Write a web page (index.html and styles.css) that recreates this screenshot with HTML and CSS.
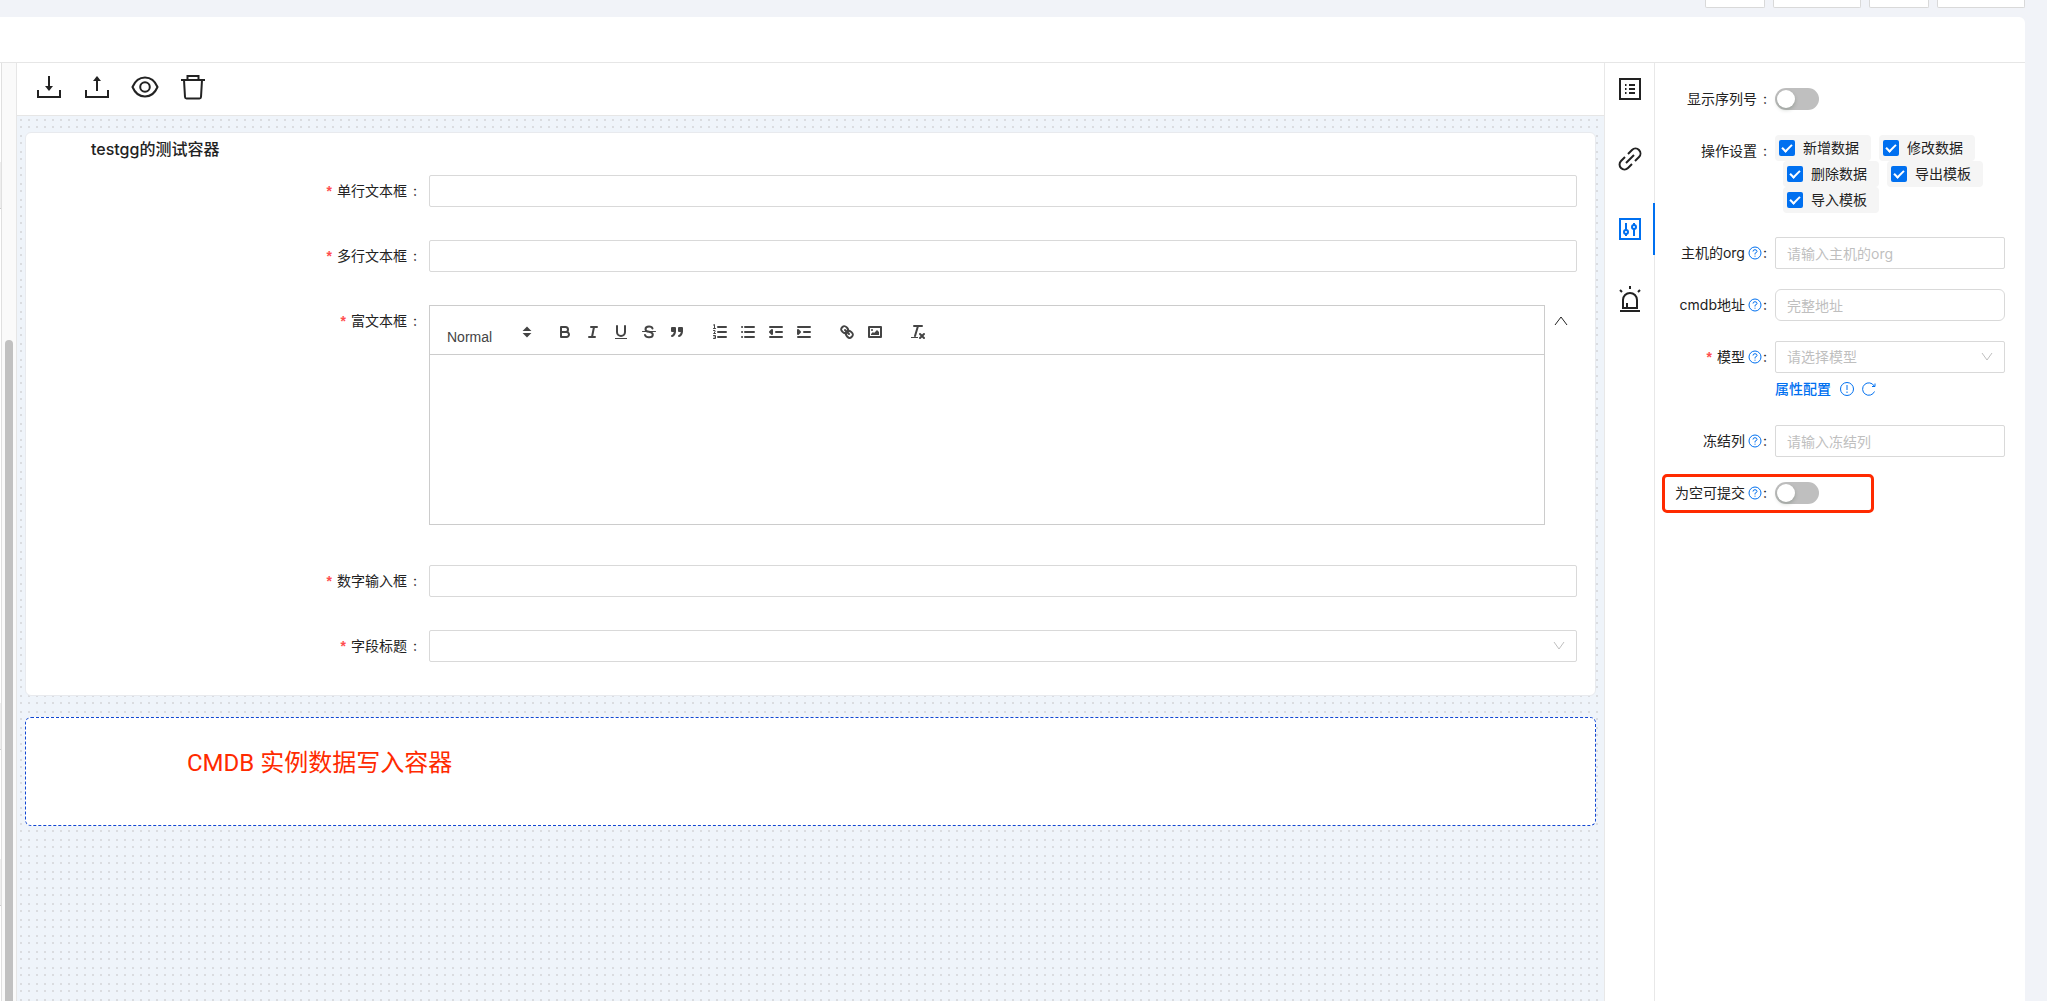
FILE: index.html
```html
<!DOCTYPE html>
<html lang="zh-CN">
<head>
  <meta charset="utf-8">
  <title>模板设计</title>
  <link rel="stylesheet" href="styles.css">
</head>
<body>
  <div class="top-actions">
    <button class="top-btn"></button>
    <button class="top-btn wide"></button>
    <button class="top-btn"></button>
    <button class="top-btn wide"></button>
  </div>

  <div class="page">
    <div class="page-header"></div>
    <div class="workspace">

      <!-- 左侧控件列表 -->
      <div class="side-list">
        <div class="side-edge">
          <i class="side-item"></i>
          <i class="side-item far"></i>
          <i class="side-item next"></i>
        </div>
        <div class="side-scroll"></div>
      </div>

      <!-- 画布 -->
      <main class="designer">
        <div class="tools">
          <button class="tool" aria-label="导入">
            <svg viewBox="0 0 28 28"><path d="M14 3v12" stroke-width="2"/><path d="M10 13h8l-4 5z" fill="currentColor" stroke="none"/><path d="M3 17v7h22v-7" stroke-width="2"/></svg>
          </button>
          <button class="tool" aria-label="导出">
            <svg viewBox="0 0 28 28"><path d="M14 18V6" stroke-width="2"/><path d="M10 8h8l-4-5z" fill="currentColor" stroke="none"/><path d="M3 17v7h22v-7" stroke-width="2"/></svg>
          </button>
          <button class="tool" aria-label="预览">
            <svg viewBox="0 0 28 28"><path d="M1.500 14C4 8 8.500 4.500 14 4.500S24 8 26.500 14C24 20 19.500 23.500 14 23.500S4 20 1.500 14z" stroke-width="2"/><circle cx="14" cy="14" r="4.800" stroke-width="2"/></svg>
          </button>
          <button class="tool" aria-label="删除">
            <svg viewBox="0 0 28 28"><path d="M2 7h24M8.500 7V3h11v4M5 7l1 17q.1 1.500 1.500 1.500h13q1.400 0 1.500-1.500L23 7" stroke-width="2"/></svg>
          </button>
        </div>

        <div class="canvas">
          <section class="card">
            <h3 class="card-title">testgg的测试容器</h3>
            <div class="row">
              <label class="label required" for="single">单行文本框</label>
              <input class="input" type="text" id="single">
            </div>
            <div class="row">
              <label class="label required" for="multi">多行文本框</label>
              <input class="input" type="text" id="multi">
            </div>
            <div class="row rich-row">
              <label class="label required" for="rich">富文本框</label>
              <div class="editor">
                <div class="editor-bar">
                  <button class="heading">Normal
                    <svg viewBox="0 0 18 18"><polygon points="7 11 9 13 11 11"/><polygon points="7 7 9 5 11 7"/></svg>
                  </button>
                  <div class="formats">
                    <button aria-label="粗体"><svg viewBox="0 0 18 18"><path d="M5,4H9.500A2.500,2.500,0,0,1,12,6.500v0A2.500,2.500,0,0,1,9.500,9H5A0,0,0,0,1,5,9V4A0,0,0,0,1,5,4Z"/><path d="M5,9h5.500A2.500,2.500,0,0,1,13,11.500v0A2.500,2.500,0,0,1,10.500,14H5a0,0,0,0,1,0,0V9A0,0,0,0,1,5,9Z"/></svg></button>
                    <button aria-label="斜体"><svg viewBox="0 0 18 18"><path d="M7 4h6M5 14h6M8 14l2-10"/></svg></button>
                    <button aria-label="下划线"><svg viewBox="0 0 18 18"><path d="M5,3V9a4.012,4.012,0,0,0,4,4H9a4.012,4.012,0,0,0,4-4V3"/><rect class="solid" x="3" y="15" width="12" height="1"/></svg></button>
                    <button aria-label="删除线"><svg viewBox="0 0 18 18"><path class="thin" d="M15.500 8.500h-13"/><path d="M12.500 5.500Q12 3.500 9 3.500 5.500 3.500 5.500 6.200 5.500 8.300 9 8.800 12.800 9.500 12.800 11.700 12.800 14.300 9 14.300 5.700 14.300 5 12"/></svg></button>
                    <button aria-label="引用"><svg viewBox="0 0 18 18"><rect class="full" x="4" y="5" width="3" height="3"/><rect class="full" x="11" y="5" width="3" height="3"/><path class="full" d="M7,8c0,4.031-3,5-3,5M14,8c0,4.031-3,5-3,5"/></svg></button>
                  </div>
                  <div class="formats">
                    <button aria-label="有序列表"><svg viewBox="0 0 18 18"><path d="M7 4h8M7 9h8M7 14h8"/><path class="thin" d="M2.500 5.500h2M3.500 5.500v-4L2.500 2M2.500 7.500h1.500v1.500L2.500 10.500h2M2.500 12.500h2v3h-2M3 14h1.500"/></svg></button>
                    <button aria-label="无序列表"><svg viewBox="0 0 18 18"><path d="M6 4h9M6 9h9M6 14h9M3 4h.1M3 9h.1M3 14h.1"/></svg></button>
                    <button aria-label="减少缩进"><svg viewBox="0 0 18 18"><path d="M3 14h12M3 4h12M9 9h6"/><polygon class="full" points="5 7 5 11 3 9"/></svg></button>
                    <button aria-label="增加缩进"><svg viewBox="0 0 18 18"><path d="M3 14h12M3 4h12M9 9h6"/><polygon class="full" points="3 7 3 11 5 9"/></svg></button>
                  </div>
                  <div class="formats">
                    <button aria-label="链接"><svg viewBox="0 0 18 18"><path d="M7 7l4 4"/><path d="M8.900,4.577a3.476,3.476,0,0,1,.36,4.679A3.476,3.476,0,0,1,4.577,8.900C3.185,7.500,2.035,6.400,4.217,4.217S7.500,3.185,8.900,4.577Z"/><path d="M13.423,9.100a3.476,3.476,0,0,0-4.679-.36,3.476,3.476,0,0,0,.36,4.679c1.392,1.392,2.500,2.542,4.679.36S14.815,10.500,13.423,9.100Z"/></svg></button>
                    <button aria-label="图片"><svg viewBox="0 0 18 18"><rect x="3" y="4" width="12" height="10"/><circle class="solid" cx="6" cy="7" r="1"/><polyline class="solid" points="5 12 5 11 7 9 8 10 11 7 13 9 13 12 5 12"/></svg></button>
                  </div>
                  <div class="formats">
                    <button aria-label="清除格式"><svg viewBox="0 0 18 18"><path d="M5 3h8M6 13l3-10M11 11l4 4M15 11l-4 4"/><rect class="solid" x="2" y="14" width="7" height="1"/></svg></button>
                  </div>
                </div>
                <textarea class="editor-body" id="rich"></textarea>
              </div>
              <button class="fold" aria-label="收起">
                <svg viewBox="0 0 14 14"><path d="M1 11L7 3l6 8"/></svg>
              </button>
            </div>
            <div class="row">
              <label class="label required" for="number">数字输入框</label>
              <input class="input" type="text" id="number">
            </div>
            <div class="row">
              <label class="label required" for="field">字段标题</label>
              <select class="input" id="field"><option></option></select>
            </div>
          </section>

          <section class="card active">
            <p class="note">CMDB 实例数据写入容器</p>
          </section>
        </div>
      </main>

      <!-- 属性分类 -->
      <nav class="tabs">
        <button class="tab" aria-label="字段"><svg viewBox="0 0 24 24"><path d="M2 2h20v20H2zM7 8h1.500M7 12h1.500M7 16h1.500M11 8h6M11 12h6M11 16h6"/></svg></button>
        <button class="tab" aria-label="关联"><svg viewBox="0 0 24 24"><path d="M8 16l8-8M10 7l4-4a4.500 4.500 0 0 1 7 7l-4 4M14 17l-4 4a4.500 4.500 0 0 1-7-7l4-4"/></svg></button>
        <button class="tab on" aria-label="配置"><svg viewBox="0 0 24 24"><path d="M2 2h20v20H2zM8 6v7M8 17v2M16 6v2M16 12v7"/><circle cx="8" cy="15" r="2"/><circle cx="16" cy="10" r="2"/></svg></button>
        <button class="tab" aria-label="告警"><svg viewBox="0 0 24 26"><path d="M12 0v3M2 4l2 2M22 4l-2 2M5 22V14a7 7 0 0 1 14 0v8M2 25h20M4 22h16M9 22v-5"/></svg></button>
      </nav>

      <aside class="props">
        <div class="prop">
          <label class="label" for="serial">显示序列号</label>
          <input class="switch" type="checkbox" id="serial">
        </div>
        <div class="prop checks-row">
          <span class="label">操作设置</span>
          <div class="checks">
            <label class="check"><input type="checkbox" checked>新增数据</label>
            <label class="check"><input type="checkbox" checked>修改数据</label>
            <label class="check"><input type="checkbox" checked>删除数据</label>
            <label class="check"><input type="checkbox" checked>导出模板</label>
            <label class="check"><input type="checkbox" checked>导入模板</label>
          </div>
        </div>
        <div class="prop">
          <label class="label tip" for="org">主机的org<svg viewBox="0 0 14 14"><circle cx="7" cy="7" r="6"/><path d="M5 5.500Q5 3.700 7 3.700T9 5.500Q9 6.500 7 7.300V8.500M7 9.700v1"/></svg></label>
          <input class="input" type="text" id="org" placeholder="请输入主机的org">
        </div>
        <div class="prop">
          <label class="label tip" for="cmdb">cmdb地址<svg viewBox="0 0 14 14"><circle cx="7" cy="7" r="6"/><path d="M5 5.500Q5 3.700 7 3.700T9 5.500Q9 6.500 7 7.300V8.500M7 9.700v1"/></svg></label>
          <input class="input round" type="text" id="cmdb" placeholder="完整地址">
        </div>
        <div class="prop">
          <label class="label tip required" for="model">模型<svg viewBox="0 0 14 14"><circle cx="7" cy="7" r="6"/><path d="M5 5.500Q5 3.700 7 3.700T9 5.500Q9 6.500 7 7.300V8.500M7 9.700v1"/></svg></label>
          <div class="model">
            <select class="input empty" id="model"><option>请选择模型</option></select>
            <div class="model-links">
              <a href="#">属性配置</a>
              <svg viewBox="0 0 16 16"><circle cx="8" cy="8" r="6.500"/><path d="M8 4v5M8 10.500v1.500"/></svg>
              <svg viewBox="0 0 16 16"><path d="M13.500 10.500A6.200 6.200 0 1 1 13.200 5M14 2.500V5.500h-3"/></svg>
            </div>
          </div>
        </div>
        <div class="prop">
          <label class="label tip" for="freeze">冻结列<svg viewBox="0 0 14 14"><circle cx="7" cy="7" r="6"/><path d="M5 5.500Q5 3.700 7 3.700T9 5.500Q9 6.500 7 7.300V8.500M7 9.700v1"/></svg></label>
          <input class="input" type="text" id="freeze" placeholder="请输入冻结列">
        </div>
        <div class="prop marked">
          <label class="label tip" for="nullable">为空可提交<svg viewBox="0 0 14 14"><circle cx="7" cy="7" r="6"/><path d="M5 5.500Q5 3.700 7 3.700T9 5.500Q9 6.500 7 7.300V8.500M7 9.700v1"/></svg></label>
          <input class="switch" type="checkbox" id="nullable">
        </div>
      </aside>
    </div>
  </div>
</body>
</html>
```

FILE: styles.css
```css
*,
*::before,
*::after {
  box-sizing: border-box;
}

body {
  margin: 0;
  height: 100vh;
  display: flex;
  flex-direction: column;
  overflow: hidden;
  background: #f1f3f8;
  color: #222;
  font: 14px/22px Inter, "Noto Sans CJK SC", sans-serif;
}

button {
  padding: 0;
  border: 0;
  background: none;
  color: inherit;
  font: inherit;
  cursor: pointer;
}

svg {
  display: block;
  fill: none;
  stroke: currentColor;
}

/* 顶部按钮 */
.top-actions {
  display: flex;
  justify-content: flex-end;
  align-items: flex-start;
  gap: 8px;
  height: 17px;
  padding-right: 22px;
}

.top-btn {
  width: 60px;
  height: 8px;
  border: 1px solid #d9d9d9;
  border-top: 0;
  border-radius: 0 0 2px 2px;
  background: #fff;
}

.top-btn.wide {
  width: 88px;
}

.page {
  flex: 1;
  display: flex;
  flex-direction: column;
  min-height: 0;
  margin-right: 22px;
  background: #fff;
  border-top-right-radius: 6px;
}

.page-header {
  height: 46px;
  border-bottom: 1px solid #e6e6e6;
}

.workspace {
  flex: 1;
  display: flex;
  min-height: 0;
}

/* 左侧 */
.side-list {
  display: flex;
  width: 17px;
  border-right: 1px solid #e6e6e6;
  background: #fafafa;
}

.side-edge {
  width: 2px;
  padding-top: 99px;
  border-right: 1px solid #e0e0e0;
  background: #fff;
}

.side-item {
  display: block;
  height: 47px;
  border-bottom: 1px solid #ccc;
  background: #eee;
}

.side-item.far {
  margin-top: 494px;
}

.side-item.next {
  margin-top: 109px;
}

.side-scroll {
  width: 8px;
  margin: 277px 0 0 3px;
  border-radius: 4px 4px 0 0;
  background: #c1c1c1;
}

/* 画布 */
.designer {
  flex: 1;
  display: flex;
  flex-direction: column;
  min-width: 0;
}

.tools {
  display: flex;
  gap: 20px;
  height: 53px;
  padding: 10px 18px;
  border-bottom: 1px solid #e6e6e6;
}

.tool,
.tool svg {
  width: 28px;
  height: 28px;
}

.canvas {
  flex: 1;
  padding: 16px 8px;
  background:
    conic-gradient(from 270deg at 2px 2px, #dadce0 90deg, transparent 0) 3px 3px / 8px 16px,
    conic-gradient(from 270deg at 2px 2px, #dadce0 90deg, transparent 0) 3px 10px / 8px 16px,
    #eff4fa;
}

.card {
  padding: 4px 18px 33px 65px;
  border: 1px solid #e8eaee;
  border-radius: 6px;
  background: #fff;
}

.card.active {
  height: 109px;
  margin-top: 21px;
  border: 1px dashed #1046d2;
}

.card-title {
  margin: 0 0 14px;
  font-size: 16px;
  line-height: 24px;
  font-weight: 500;
}

.note {
  margin: 24px 0 0 96px;
  color: #ff2a00;
  font-family: Roboto, "Noto Sans CJK SC", sans-serif;
  font-size: 24px;
  line-height: 34px;
}

.row {
  display: flex;
  margin-bottom: 33px;
}

.row:last-child {
  margin-bottom: 0;
}

.row .label {
  width: 338px;
  padding-right: 12px;
}

.label {
  flex: none;
  display: flex;
  justify-content: flex-end;
  align-items: center;
  height: 32px;
}

.label::after {
  content: ":";
  margin-left: 6px;
}

.label.required::before {
  content: "*";
  margin-right: 5px;
  color: #ff4d4f;
  font-family: "Liberation Sans", sans-serif;
  font-weight: bold;
}

.input {
  flex: 1;
  min-width: 0;
  width: 100%;
  height: 32px;
  padding: 4px 11px;
  border: 1px solid #d9d9d9;
  border-radius: 2px;
  background: #fff;
  color: #222;
  font: inherit;
}

.input.round {
  border-radius: 6px;
}

.input::placeholder,
.input.empty {
  color: #bfbfbf;
}

select.input {
  appearance: none;
  background: #fff url("data:image/svg+xml,%3Csvg xmlns='http://www.w3.org/2000/svg' viewBox='0 0 12 12' fill='none' stroke='%23bfbfbf'%3E%3Cpath d='M1 2l5 7 5-7'/%3E%3C/svg%3E") no-repeat right 11px center / 12px 12px;
}

/* 富文本 */
.rich-row {
  margin-bottom: 40px;
}

.editor {
  flex: 1;
  height: 220px;
  display: flex;
  flex-direction: column;
  border: 1px solid #ccc;
  color: #444;
}

.editor-bar {
  display: flex;
  align-items: center;
  height: 49px;
  padding: 0 8px 0 17px;
  border-bottom: 1px solid #ccc;
}

.heading {
  display: flex;
  align-items: center;
  justify-content: space-between;
  width: 89px;
  margin-right: 15px;
  padding-top: 14px;
  font-family: "Liberation Sans", sans-serif;
  font-weight: 500;
}

.heading svg {
  width: 18px;
  margin-top: -10px;
  fill: #444;
  stroke-width: 2;
}

.formats {
  display: flex;
  margin-right: 15px;
  padding-top: 4px;
}

.formats button {
  width: 28px;
  height: 24px;
  padding: 3px 5px;
}

.formats svg {
  width: 18px;
  height: 18px;
  stroke-width: 2;
  stroke-linecap: round;
  stroke-linejoin: round;
}

.formats .thin {
  stroke-width: 1;
}

.formats .full {
  fill: #444;
}

.formats .solid {
  fill: #444;
  stroke: none;
}

.editor-body {
  flex: 1;
  padding: 12px 15px;
  border: 0;
  resize: none;
  font: inherit;
}

.fold {
  width: 32px;
  height: 32px;
  padding: 9px;
}

/* 属性分类 */
.tabs {
  display: flex;
  flex-direction: column;
  gap: 18px;
  width: 51px;
  border: solid #e8e8e8;
  border-width: 0 1px;
}

.tab {
  display: flex;
  align-items: center;
  justify-content: center;
  height: 52px;
}

.tab svg {
  width: 24px;
  stroke-width: 2;
}

.tab.on {
  margin-right: -1px;
  padding-left: 1px;
  border-right: 2px solid #0070f0;
  color: #0070f0;
}

/* 属性面板 */
.props {
  width: 370px;
  padding: 20px 20px 0 0;
}

.prop {
  display: flex;
  position: relative;
  margin-bottom: 20px;
}

.prop .label {
  width: 120px;
  padding-right: 8px;
}

.prop .tip::after {
  margin-left: 1px;
}

.label svg {
  width: 14px;
  margin-left: 3px;
  color: #0070f0;
}

.switch {
  appearance: none;
  width: 44px;
  height: 22px;
  margin: 5px 0;
  padding: 2px;
  border-radius: 11px;
  background: #bfbfbf;
}

.switch::before {
  content: "";
  display: block;
  width: 18px;
  height: 18px;
  border-radius: 50%;
  background: #fff;
  box-shadow: 0 2px 4px rgba(0, 35, 11, 0.2);
}

.checks-row {
  margin-bottom: 24px;
}

.checks {
  flex: 1;
  display: flex;
  flex-wrap: wrap;
}

.check {
  display: flex;
  align-items: center;
  gap: 8px;
  height: 26px;
  margin-left: 8px;
  padding: 0 12px 0 4px;
  border-radius: 4px;
  background: #f5f5f5;
}

.check:first-child {
  margin-left: 0;
}

.check input {
  appearance: none;
  width: 16px;
  height: 16px;
  margin: 0;
  border-radius: 2px;
  background: #0070f0;
}

.check input::before {
  content: "";
  display: block;
  width: 6px;
  height: 10px;
  margin: 2px 0 0 5px;
  border: solid #fff;
  border-width: 0 2px 2px 0;
  transform: rotate(45deg);
}

.model {
  flex: 1;
}

.model-links {
  display: flex;
  align-items: center;
  gap: 6px;
  height: 32px;
  color: #0070f0;
}

.model-links a {
  color: inherit;
  text-decoration: none;
  font-weight: 500;
  margin-right: 2px;
}

.model-links svg {
  width: 16px;
}

/* 重点标注 */
.marked::after {
  content: "";
  position: absolute;
  top: -3px;
  left: 7px;
  width: 212px;
  height: 39px;
  border: 3px solid #ff2a00;
  border-radius: 5px;
}
```
